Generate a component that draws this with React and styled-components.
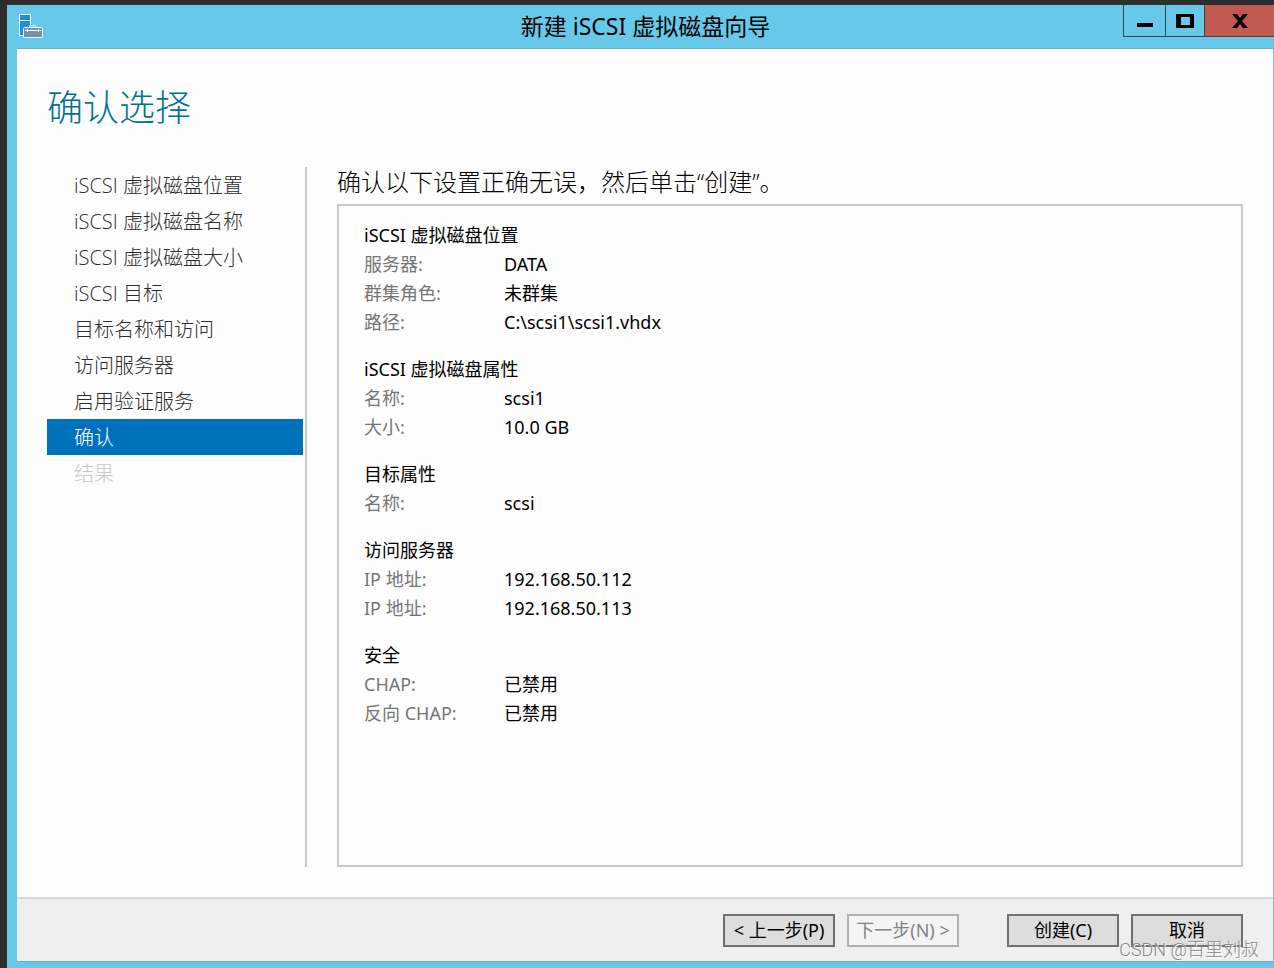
import React from "react";
import styled, { createGlobalStyle } from "styled-components";

const steps = [
  { label: "iSCSI 虚拟磁盘位置" },
  { label: "iSCSI 虚拟磁盘名称" },
  { label: "iSCSI 虚拟磁盘大小" },
  { label: "iSCSI 目标" },
  { label: "目标名称和访问" },
  { label: "访问服务器" },
  { label: "启用验证服务" },
  { label: "确认", active: true },
  { label: "结果", disabled: true },
];

const groups = [
  {
    title: "iSCSI 虚拟磁盘位置",
    rows: [
      ["服务器:", "DATA"],
      ["群集角色:", "未群集"],
      ["路径:", "C:\\scsi1\\scsi1.vhdx"],
    ],
  },
  {
    title: "iSCSI 虚拟磁盘属性",
    rows: [
      ["名称:", "scsi1"],
      ["大小:", "10.0 GB"],
    ],
  },
  {
    title: "目标属性",
    rows: [["名称:", "scsi"]],
  },
  {
    title: "访问服务器",
    rows: [
      ["IP 地址:", "192.168.50.112"],
      ["IP 地址:", "192.168.50.113"],
    ],
  },
  {
    title: "安全",
    rows: [
      ["CHAP:", "已禁用"],
      ["反向 CHAP:", "已禁用"],
    ],
  },
];

const ServerIcon = () => (
  <svg width="24" height="25" viewBox="0 0 24 25" aria-hidden="true">
    <rect x="0.5" y="0.5" width="11" height="21" fill="#1f8fdd" stroke="#fff" />
    <path d="M1 6.5h10" stroke="#fff" />
    <path d="M10.5 13.5v-2h6v2" fill="#66c9ea" stroke="#cfe9f5" />
    <rect
      x="4.5"
      y="13.5"
      width="19"
      height="10"
      rx="1"
      fill="#7394a8"
      stroke="#fff"
    />
    <path d="M6 16.5h16M8.5 15v3M19.5 15v3" stroke="#fff" />
  </svg>
);

const MinimizeIcon = () => (
  <svg width="16" height="16" viewBox="0 0 16 16" aria-hidden="true">
    <path d="M0 10h16v4H0z" />
  </svg>
);

const MaximizeIcon = () => (
  <svg width="18" height="14" viewBox="0 0 18 14" aria-hidden="true">
    <path d="M0 0h18v14H0zM5 3v8h9V3z" fillRule="evenodd" />
  </svg>
);

const CloseIcon = () => (
  <svg width="16" height="14" viewBox="0 0 16 14" aria-hidden="true">
    <path d="M0 0h5l3 4 3-4h5l-6 7 6 7h-5l-3-4-3 4H0l6-7z" />
  </svg>
);

export default function App() {
  return (
    <Desktop>
      <GlobalStyle />
      <Window>
        <TitleBar>
          <AppIcon>
            <ServerIcon />
          </AppIcon>
          <Title>新建 iSCSI 虚拟磁盘向导</Title>
          <WindowControls>
            <MinimizeButton aria-label="最小化">
              <MinimizeIcon />
            </MinimizeButton>
            <ControlButton aria-label="最大化">
              <MaximizeIcon />
            </ControlButton>
            <CloseButton aria-label="关闭">
              <CloseIcon />
            </CloseButton>
          </WindowControls>
        </TitleBar>
        <Content>
          <Heading>确认选择</Heading>
          <Body>
            <Steps>
              {steps.map((step) => (
                <Step
                  key={step.label}
                  $active={step.active}
                  $disabled={step.disabled}
                  aria-current={step.active ? "step" : undefined}
                >
                  {step.label}
                </Step>
              ))}
            </Steps>
            <Main>
              <Intro>确认以下设置正确无误，然后单击“创建”。</Intro>
              <Summary>
                {groups.map((group) => (
                  <section key={group.title}>
                    <GroupTitle>{group.title}</GroupTitle>
                    <Details>
                      {group.rows.map(([label, value]) => (
                        <Row key={label + value}>
                          <Label>{label}</Label>
                          <Value>{value}</Value>
                        </Row>
                      ))}
                    </Details>
                  </section>
                ))}
              </Summary>
            </Main>
          </Body>
          <Footer>
            <ButtonGroup>
              <Button>&lt; 上一步(P)</Button>
              <Button disabled>下一步(N) &gt;</Button>
            </ButtonGroup>
            <ButtonGroup>
              <Button>创建(C)</Button>
              <Button>取消</Button>
            </ButtonGroup>
          </Footer>
        </Content>
      </Window>
      <Watermark>CSDN @百里刘叔</Watermark>
    </Desktop>
  );
}

const GlobalStyle = createGlobalStyle`
  * {
    box-sizing: border-box;
  }
  body {
    margin: 0;
    font-family: "Noto Sans", "Noto Sans CJK SC", sans-serif;
    color: #000;
  }
  button {
    font-family: inherit;
  }
`;

const Desktop = styled.div`
  position: relative;
  display: flex;
  min-height: 100vh;
  padding: 5px 0 0 7px;
  background-color: #2d2d2d;
`;

const Window = styled.div`
  flex: 1;
  display: flex;
  flex-direction: column;
  padding: 0 1px 6px 10px;
  background-color: #66c9ea;
`;

const TitleBar = styled.header`
  display: grid;
  grid-template-columns: 1fr auto 1fr;
  align-items: start;
  height: 43px;
  margin-right: -1px;
`;

const AppIcon = styled.div`
  padding: 9px 0 0 2px;
`;

const Title = styled.h1`
  margin: 0;
  font-size: 23px;
  font-weight: 400;
  line-height: 43px;
`;

const WindowControls = styled.div`
  display: flex;
  justify-content: flex-end;
`;

const ControlButton = styled.button`
  display: flex;
  align-items: center;
  justify-content: center;
  width: 39px;
  height: 32px;
  padding: 0;
  border: solid #2f4650;
  border-width: 0 0 1px 1px;
  background-color: transparent;
`;

const MinimizeButton = styled(ControlButton)`
  width: 42px;
`;

const CloseButton = styled(ControlButton)`
  width: 70px;
  border-color: #5b3532;
  background-color: #c15a50;
`;

const Content = styled.div`
  flex: 1;
  display: flex;
  flex-direction: column;
  border: solid #6fa9c4;
  border-width: 1px 0;
  background-color: #fdfdfd;
`;

const Heading = styled.h2`
  margin: 0;
  padding: 33px 30px;
  color: #007394;
  font-size: 36px;
  font-weight: 300;
  line-height: 52px;
`;

const Body = styled.div`
  flex: 1;
  display: flex;
  gap: 30px;
  padding: 0 30px;
`;

const Steps = styled.ol`
  width: 260px;
  margin: 0;
  padding: 0 2px 0 0;
  border-right: 2px solid #c8c8c8;
  list-style: none;
  font-family: "Open Sans", "Noto Sans CJK SC", sans-serif;
`;

const Step = styled.li`
  height: 36px;
  padding: 2px 0 0 27px;
  color: ${({ $active, $disabled }) =>
    $active ? "#fff" : $disabled ? "#c8c8c8" : "#2b2b2b"};
  background-color: ${({ $active }) => ($active ? "#0072bc" : "transparent")};
  font-size: 20px;
  font-weight: 300;
  line-height: 34px;
`;

const Main = styled.main`
  flex: 1;
  display: flex;
  flex-direction: column;
`;

const Intro = styled.p`
  margin: 0;
  padding-bottom: 7px;
  font-family: "Open Sans", "Noto Sans CJK SC", sans-serif;
  font-size: 24px;
  font-weight: 300;
  line-height: 30px;
`;

const Summary = styled.div`
  flex: 1;
  display: flex;
  flex-direction: column;
  gap: 18px;
  padding: 15px 25px;
  border: 2px solid #c8c8c8;
  font-size: 18px;
  line-height: 29px;
`;

const GroupTitle = styled.h3`
  margin: 0;
  font-size: 18px;
  font-weight: 400;
`;

const Details = styled.dl`
  margin: 0;
`;

const Row = styled.div`
  display: grid;
  grid-template-columns: 140px 1fr;
  height: 29px;
`;

const Label = styled.dt`
  color: #757575;
`;

const Value = styled.dd`
  margin: 0;
`;

const Footer = styled.footer`
  display: flex;
  justify-content: flex-end;
  gap: 48px;
  margin-top: 30px;
  padding: 15px 30px 14px;
  border-top: 2px solid #d9d9d9;
  background-color: #efefef;
`;

const ButtonGroup = styled.div`
  display: flex;
  gap: 12px;
`;

const Button = styled.button`
  width: 112px;
  height: 33px;
  padding: 0;
  border: 2px solid #707070;
  background-color: #dddddd;
  color: #000;
  font-size: 18px;
  line-height: 29px;
  white-space: nowrap;
  &:disabled {
    border-color: #adb2b5;
    background-color: #f4f4f4;
    color: #838383;
  }
`;

const Watermark = styled.div`
  position: absolute;
  right: 15px;
  bottom: 5px;
  color: #858585;
  font-family: Roboto, "Noto Sans CJK SC", sans-serif;
  font-size: 18px;
  font-weight: 300;
  line-height: 26px;
  text-shadow: 1px 1px 0 #fff;
`;
